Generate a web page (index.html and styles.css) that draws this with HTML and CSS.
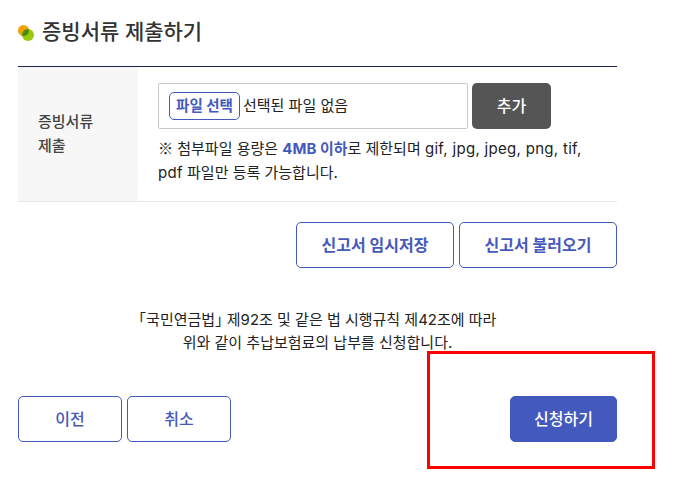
FILE: index.html
```html
<!DOCTYPE html>
<html lang="ko">
<head>
<meta charset="utf-8">
<title>증빙서류 제출하기</title>
<link rel="stylesheet" href="styles.css">
</head>
<body>
<main class="page">
  <h2 class="title">
    <svg class="dot" width="16" height="16" viewBox="0 0 16 16" aria-hidden="true">
      <defs><clipPath id="dot-clip"><circle cx="10" cy="10" r="6"/></clipPath></defs>
      <circle cx="5.5" cy="5.5" r="5.5" fill="#f5a100"/>
      <circle cx="10" cy="10" r="6" fill="#9ac90e"/>
      <circle cx="5.5" cy="5.5" r="5.5" fill="#4f8a10" clip-path="url(#dot-clip)"/>
    </svg>
    증빙서류 제출하기
  </h2>
  <section class="row">
    <div class="label">증빙서류<br>제출</div>
    <div class="field">
      <div class="file-line">
        <div class="file-box"><span class="file-btn">파일 선택</span><span class="file-name">선택된 파일 없음</span></div>
        <button class="add" type="button">추가</button>
      </div>
      <p class="note"><span class="mark">※</span> 첨부파일 용량은 <strong>4MB 이하</strong>로 제한되며 <span class="ext">gif, jpg, jpeg, png, tif, pdf</span> 파일만 등록 가능합니다.</p>
    </div>
  </section>
  <div class="report-actions">
    <button class="btn report" type="button">신고서 임시저장</button>
    <button class="btn report" type="button">신고서 불러오기</button>
  </div>
  <p class="statement"><span class="law">「국민연금법」</span> 제92조 및 같은 법 시행규칙 제42조에 따라<br>위와 같이 추납보험료의 납부를 신청합니다.</p>
  <div class="footer">
    <div class="footer-left">
      <button class="btn nav" type="button">이전</button>
      <button class="btn nav" type="button">취소</button>
    </div>
    <button class="btn primary" type="button">신청하기</button>
  </div>
  <div class="highlight"></div>
</main>
</body>
</html>
```
FILE: styles.css
```css
* { box-sizing: border-box; }
html, body { margin: 0; padding: 0; background: #fff; }
body {
  font-family: Inter, "Noto Sans CJK KR", sans-serif;
  color: #222;
  font-size: 15px;
}
.page { position: relative; width: 675px; height: 481px; padding: 0 58px 0 18px; }
.title {
  display: flex; align-items: center; gap: 8px;
  height: 66px; margin: 0; padding-bottom: 2px;
  font-size: 21px; line-height: 30px; font-weight: 500; color: #333;
}
.dot { flex: none; margin-top: 2px; }
.row {
  display: flex; height: 136px;
  border-top: 1px solid #1b2350;
  border-bottom: 1px solid #e8e8e8;
}
.label {
  width: 120px; background: #f7f7f7;
  padding: 0 20px 0;
  display: flex; align-items: center;
  font-size: 15px; font-weight: 500; line-height: 24px; color: #444;
}
.field { flex: 1; padding: 16px 0 0 20px; }
.file-line { display: flex; gap: 4px; }
.file-box {
  width: 310px; height: 46px;
  border: 1px solid #c8c8c8; border-radius: 2px;
  display: flex; align-items: center; padding-left: 10px;
}
.file-btn {
  width: 71px; height: 28px;
  border: 1px solid #4459bd; border-radius: 5px;
  color: #4459bd; font-weight: 700; font-size: 14.5px; line-height: 20px;
  display: flex; align-items: center; justify-content: center;
  margin-right: 3px;
}
.file-name { font-size: 15px; line-height: 20px; color: #222; }
.add {
  width: 79px; height: 46px;
  border: 0; border-radius: 5px; background: #555; color: #fff;
  font: 500 16px/22px Inter, "Noto Sans CJK KR", sans-serif;
}
.note { margin: 7px 0 0; width: 440px; font-size: 15px; line-height: 24px; color: #222; }
.note strong { color: #4459bd; font-weight: 700; }
.mark { font-family: "Noto Sans CJK KR", sans-serif; }
.ext { letter-spacing: .3px; }
.report-actions { display: flex; justify-content: flex-end; gap: 5px; margin-top: 20px; }
.btn {
  height: 46px; border-radius: 5px;
  border: 1px solid #4459bd; background: #fff; color: #4459bd;
  font: 500 16px/22px Inter, "Noto Sans CJK KR", sans-serif;
}
.report { width: 158px; font-weight: 700; }
.statement { margin: 40px 0 0; text-align: center; font-size: 15px; line-height: 23px; color: #222; }
.law { font-feature-settings: "halt"; }
.footer { display: flex; justify-content: space-between; margin-top: 42px; }
.footer-left { display: flex; gap: 5px; }
.nav { width: 104px; }
.primary { width: 107px; background: #4459bd; color: #fff; }
.highlight {
  position: absolute; left: 427px; top: 351px;
  width: 228px; height: 118px;
  border: 3px solid #f00;
}
```
